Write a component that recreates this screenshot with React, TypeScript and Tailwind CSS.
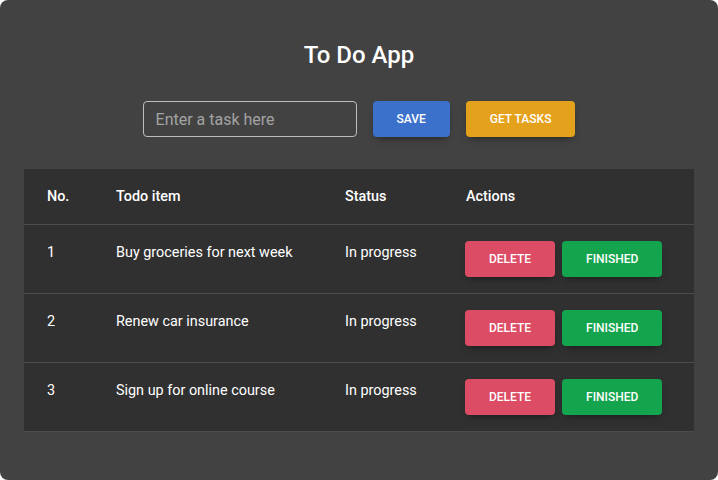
import { useState } from 'react';

interface Task {
  id: number;
  title: string;
  status: string;
}

const initialTasks: Task[] = [
  { id: 1, title: 'Buy groceries for next week', status: 'In progress' },
  { id: 2, title: 'Renew car insurance', status: 'In progress' },
  { id: 3, title: 'Sign up for online course', status: 'In progress' },
];

const btn =
  'h-9 px-6 rounded text-[12px] font-medium uppercase leading-none text-white shadow-[0_4px_9px_-4px_rgba(0,0,0,0.6)]';

export default function App() {
  const [tasks, setTasks] = useState<Task[]>(initialTasks);
  const [text, setText] = useState('');

  const addTask = () => {
    if (!text.trim()) return;
    setTasks([...tasks, { id: tasks.length + 1, title: text, status: 'In progress' }]);
    setText('');
  };

  return (
    <div className="w-[718px] h-[480px] bg-white font-['Roboto',sans-serif]">
      <div className="h-full rounded-lg bg-[#424242] flex flex-col items-center pt-[40px]">
        <h1 className="text-[24px] leading-[30px] font-medium text-white">To Do App</h1>

        {/* Form */}
        <div className="mt-[31px] flex items-center gap-4">
          <input
            value={text}
            onChange={(e) => setText(e.target.value)}
            placeholder="Enter a task here"
            className="w-[214px] h-9 rounded border border-[#bdbdbd] bg-transparent px-3 text-[16px] text-white placeholder:text-[#a3a3a3] outline-none"
          />
          <button onClick={addTask} className={`${btn} bg-[#3b71ca]`}>
            Save
          </button>
          <button className={`${btn} bg-[#e4a11b]`}>Get tasks</button>
        </div>

        {/* Table */}
        <div className="mt-[32px] w-[670px] bg-[#303030] text-white text-[14.4px]">
          <div className="grid grid-cols-[70px_229px_121px_250px] h-[56px] items-center border-b border-[#4c4c4c] font-medium">
            <div className="pl-[23px]">No.</div>
            <div className="pl-[22px]">Todo item</div>
            <div className="pl-[22px]">Status</div>
            <div className="pl-[22px]">Actions</div>
          </div>
          {tasks.map((t) => (
            <div
              key={t.id}
              className="grid grid-cols-[70px_229px_121px_250px] h-[69px] border-b border-[#4c4c4c] pt-[16px] leading-[22px]"
            >
              <div className="pl-[23px] mt-[1px]">{t.id}</div>
              <div className="pl-[22px] mt-[1px]">{t.title}</div>
              <div className="pl-[22px] mt-[1px]">{t.status}</div>
              <div className="pl-[21px] flex gap-[7px] items-start">
                <button
                  onClick={() => setTasks(tasks.filter((x) => x.id !== t.id))}
                  className={`${btn} bg-[#dc4c64]`}
                >
                  Delete
                </button>
                <button className={`${btn} bg-[#14a44d]`}>Finished</button>
              </div>
            </div>
          ))}
        </div>
      </div>
    </div>
  );
}
